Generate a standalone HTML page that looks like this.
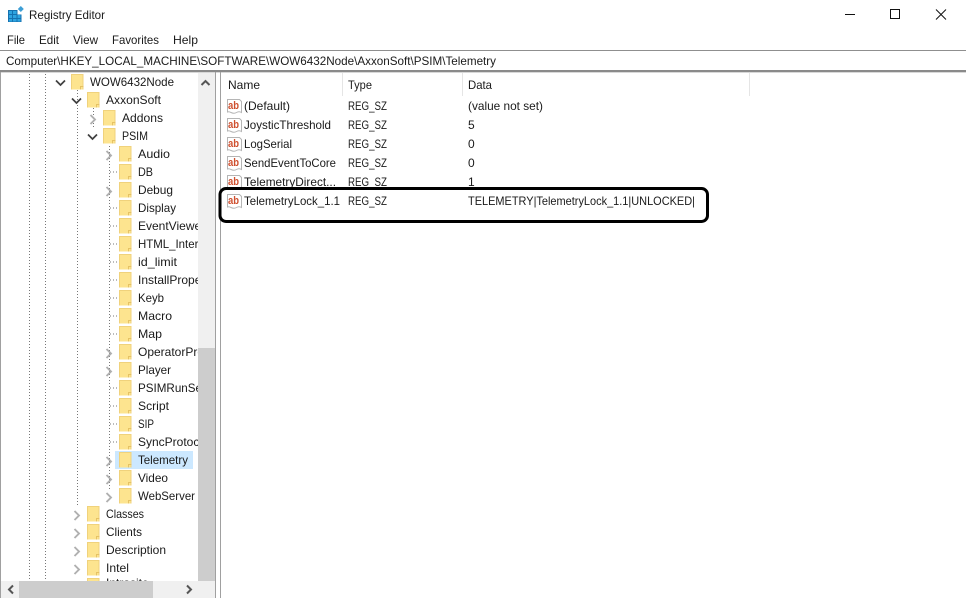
<!DOCTYPE html>
<html><head><meta charset="utf-8"><title>Registry Editor</title>
<style>
html,body{margin:0;padding:0;background:#fff;width:966px;height:598px;overflow:hidden}
svg{display:block}
text{font-family:"Liberation Sans",sans-serif;font-size:12px;fill:#1a1a1a}
.ab{font-size:11px;font-weight:bold;fill:#cf4f2e}
</style></head><body>
<svg width="966" height="598" viewBox="0 0 966 598" xmlns="http://www.w3.org/2000/svg">
<defs>
<g id="f"><rect x="0" y="0" width="12.500" height="15.500" fill="#fde48f"/><path d="M0.500 15.500V0.500H12V15.500" fill="none" stroke="#f0d27c"/><path d="M9.500 15.500V12.500H12.500" fill="none" stroke="#e6c264"/></g>
<path id="c" d="M-3 -4L1.500 0.500L-3 5" fill="none" stroke="#b0b0b0" stroke-width="1.900"/>
<path id="d" d="M-4.500 -2L0 2.500L4.500 -2" fill="none" stroke="#404040" stroke-width="1.700"/>
<g id="i"><path d="M1.500 1.500H13.500L15.500 3.500V14.500Q13 13 10.500 14.500T5 14.500T1.500 14.500Z" fill="#fff" stroke="#b5b5b5"/></g>
<clipPath id="tc"><rect x="1" y="73" width="197" height="508"/></clipPath>
<clipPath id="lc"><rect x="221" y="73" width="745" height="525"/></clipPath>
</defs>

<!-- title bar -->
<rect x="8" y="10" width="13.500" height="12" fill="#1572b0"/>
<rect x="17.500" y="10" width="4" height="4.500" fill="#fff"/>
<g fill="#2fa4e0"><rect x="9" y="11" width="3" height="3"/><rect x="13" y="11" width="3.500" height="3"/><rect x="9" y="15" width="3" height="3"/><rect x="13" y="15" width="3.500" height="3"/><rect x="17.500" y="15" width="3" height="3"/><rect x="9" y="19" width="3" height="2.500"/><rect x="13" y="19" width="3.500" height="2.500"/><rect x="17.500" y="19" width="3" height="2.500"/></g>
<path d="M20.800 6L23.800 9L20.800 12L17.800 9Z" fill="#3e9fd6"/>
<text x="29" y="19" textLength="76" lengthAdjust="spacingAndGlyphs">Registry Editor</text>
<rect x="845" y="14" width="10" height="1" fill="#111"/>
<rect x="890.500" y="9.500" width="9" height="9" fill="none" stroke="#111"/>
<path d="M936 9.500L946 19.500M946 9.500L936 19.500" stroke="#111" fill="none"/>

<!-- menu -->
<text x="7" y="44" textLength="18" lengthAdjust="spacingAndGlyphs">File</text>
<text x="39" y="44" textLength="20" lengthAdjust="spacingAndGlyphs">Edit</text>
<text x="73" y="44" textLength="25" lengthAdjust="spacingAndGlyphs">View</text>
<text x="112" y="44" textLength="47" lengthAdjust="spacingAndGlyphs">Favorites</text>
<text x="173" y="44" textLength="25" lengthAdjust="spacingAndGlyphs">Help</text>

<!-- address bar -->
<rect x="0" y="50" width="966" height="1" fill="#8f8f8f"/>
<text x="6" y="65" textLength="490" lengthAdjust="spacingAndGlyphs">Computer\HKEY_LOCAL_MACHINE\SOFTWARE\WOW6432Node\AxxonSoft\PSIM\Telemetry</text>
<rect x="0" y="70" width="966" height="2" fill="#8a8a8a"/>
<rect x="0" y="72" width="966" height="1" fill="#d8d8d8"/>

<!-- pane borders -->
<rect x="0" y="72" width="1" height="526" fill="#a0a0a0"/>
<rect x="215" y="72" width="1" height="526" fill="#a0a0a0"/>
<rect x="220" y="72" width="1" height="526" fill="#a0a0a0"/>

<!-- tree -->
<rect x="115" y="451" width="78" height="18" fill="#cce8ff"/>
<g stroke="#777" stroke-dasharray="1 2" fill="none">
<path d="M29.500 74V581M45.500 74V581M77.500 90V505M93.500 108V127M109.500 146V490"/>
<path d="M110 172H117M110 208H117M110 226H117M110 244H117M110 262H117M110 280H117M110 298H117M110 316H117M110 334H117M110 388H117M110 406H117M110 424H117M110 442H117"/>
</g>
<g clip-path="url(#tc)">
<use href="#d" x="60.500" y="82.500"/><use href="#d" x="76.500" y="100.500"/><use href="#c" x="93.500" y="119"/><use href="#d" x="92.500" y="136.500"/>
<use href="#c" x="109.500" y="155"/><use href="#c" x="109.500" y="191"/><use href="#c" x="109.500" y="353"/><use href="#c" x="109.500" y="371"/><use href="#c" x="109.500" y="461"/><use href="#c" x="109.500" y="479"/><use href="#c" x="109.500" y="497"/>
<use href="#c" x="77.500" y="515"/><use href="#c" x="77.500" y="533"/><use href="#c" x="77.500" y="551"/><use href="#c" x="77.500" y="569"/>

<use href="#f" x="71" y="74"/><text x="90" y="86" textLength="84" lengthAdjust="spacingAndGlyphs">WOW6432Node</text>
<use href="#f" x="87" y="92"/><text x="106" y="104" textLength="55" lengthAdjust="spacingAndGlyphs">AxxonSoft</text>
<use href="#f" x="103" y="110"/><text x="122" y="122" textLength="41" lengthAdjust="spacingAndGlyphs">Addons</text>
<use href="#f" x="103" y="128"/><text x="122" y="140" textLength="26" lengthAdjust="spacingAndGlyphs">PSIM</text>
<use href="#f" x="119" y="146"/><text x="138" y="158" textLength="32" lengthAdjust="spacingAndGlyphs">Audio</text>
<use href="#f" x="119" y="164"/><text x="138" y="176" textLength="15" lengthAdjust="spacingAndGlyphs">DB</text>
<use href="#f" x="119" y="182"/><text x="138" y="194" textLength="35" lengthAdjust="spacingAndGlyphs">Debug</text>
<use href="#f" x="119" y="200"/><text x="138" y="212" textLength="38" lengthAdjust="spacingAndGlyphs">Display</text>
<use href="#f" x="119" y="218"/><text x="138" y="230">EventViewer</text>
<use href="#f" x="119" y="236"/><text x="138" y="248" textLength="82" lengthAdjust="spacingAndGlyphs">HTML_Interface</text>
<use href="#f" x="119" y="254"/><text x="138" y="266" textLength="39" lengthAdjust="spacingAndGlyphs">id_limit</text>
<use href="#f" x="119" y="272"/><text x="138" y="284">InstallProperties</text>
<use href="#f" x="119" y="290"/><text x="138" y="302" textLength="26" lengthAdjust="spacingAndGlyphs">Keyb</text>
<use href="#f" x="119" y="308"/><text x="138" y="320" textLength="34" lengthAdjust="spacingAndGlyphs">Macro</text>
<use href="#f" x="119" y="326"/><text x="138" y="338" textLength="24" lengthAdjust="spacingAndGlyphs">Map</text>
<use href="#f" x="119" y="344"/><text x="138" y="356">OperatorProtocol</text>
<use href="#f" x="119" y="362"/><text x="138" y="374" textLength="33" lengthAdjust="spacingAndGlyphs">Player</text>
<use href="#f" x="119" y="380"/><text x="138" y="392" textLength="84" lengthAdjust="spacingAndGlyphs">PSIMRunServer</text>
<use href="#f" x="119" y="398"/><text x="138" y="410" textLength="31" lengthAdjust="spacingAndGlyphs">Script</text>
<use href="#f" x="119" y="416"/><text x="138" y="428" textLength="16" lengthAdjust="spacingAndGlyphs">SIP</text>
<use href="#f" x="119" y="434"/><text x="138" y="446">SyncProtocol</text>
<use href="#f" x="119" y="452"/><text x="138" y="464" textLength="50" lengthAdjust="spacingAndGlyphs">Telemetry</text>
<use href="#f" x="119" y="470"/><text x="138" y="482" textLength="30" lengthAdjust="spacingAndGlyphs">Video</text>
<use href="#f" x="119" y="488"/><text x="138" y="500" textLength="57" lengthAdjust="spacingAndGlyphs">WebServer</text>
<use href="#f" x="87" y="506"/><text x="106" y="518" textLength="38" lengthAdjust="spacingAndGlyphs">Classes</text>
<use href="#f" x="87" y="524"/><text x="106" y="536" textLength="36" lengthAdjust="spacingAndGlyphs">Clients</text>
<use href="#f" x="87" y="542"/><text x="106" y="554" textLength="60" lengthAdjust="spacingAndGlyphs">Description</text>
<use href="#f" x="87" y="560"/><text x="106" y="572" textLength="23" lengthAdjust="spacingAndGlyphs">Intel</text>
<use href="#f" x="87" y="578"/><text x="106" y="587">Intrasite</text>
</g>

<!-- vertical scrollbar -->
<rect x="198" y="73" width="17" height="508" fill="#f0f0f0"/>
<rect x="198" y="348" width="17" height="233" fill="#cdcdcd"/>
<path d="M201.500 85L205.500 81L209.500 85" fill="none" stroke="#555" stroke-width="2"/>
<!-- horizontal scrollbar -->
<rect x="1" y="581" width="214" height="17" fill="#f0f0f0"/>
<rect x="19" y="581" width="134" height="17" fill="#cdcdcd"/>
<path d="M13 585.500L9 589.500L13 593.500" fill="none" stroke="#555" stroke-width="2"/>
<path d="M187 585.500L191 589.500L187 593.500" fill="none" stroke="#555" stroke-width="2"/>

<!-- list header -->
<g clip-path="url(#lc)">
<text x="228" y="89" textLength="32" lengthAdjust="spacingAndGlyphs">Name</text>
<text x="348" y="89" textLength="24" lengthAdjust="spacingAndGlyphs">Type</text>
<text x="468" y="89" textLength="24" lengthAdjust="spacingAndGlyphs">Data</text>
<path d="M342.500 73V96M462.500 73V96M749.500 73V96" stroke="#e5e5e5"/>

<!-- list rows -->
<use href="#i" x="226" y="98"/><text class="ab" x="228" y="109" textLength="11" lengthAdjust="spacingAndGlyphs">ab</text>
<text x="244" y="110" textLength="46" lengthAdjust="spacingAndGlyphs">(Default)</text><text x="348" y="110" textLength="39" lengthAdjust="spacingAndGlyphs">REG_SZ</text><text x="468" y="110" textLength="75" lengthAdjust="spacingAndGlyphs">(value not set)</text>

<use href="#i" x="226" y="117"/><text class="ab" x="228" y="128" textLength="11" lengthAdjust="spacingAndGlyphs">ab</text>
<text x="244" y="129" textLength="87" lengthAdjust="spacingAndGlyphs">JoysticThreshold</text><text x="348" y="129" textLength="39" lengthAdjust="spacingAndGlyphs">REG_SZ</text><text x="468" y="129">5</text>

<use href="#i" x="226" y="136"/><text class="ab" x="228" y="147" textLength="11" lengthAdjust="spacingAndGlyphs">ab</text>
<text x="244" y="148" textLength="48" lengthAdjust="spacingAndGlyphs">LogSerial</text><text x="348" y="148" textLength="39" lengthAdjust="spacingAndGlyphs">REG_SZ</text><text x="468" y="148">0</text>

<use href="#i" x="226" y="155"/><text class="ab" x="228" y="166" textLength="11" lengthAdjust="spacingAndGlyphs">ab</text>
<text x="244" y="167" textLength="92" lengthAdjust="spacingAndGlyphs">SendEventToCore</text><text x="348" y="167" textLength="39" lengthAdjust="spacingAndGlyphs">REG_SZ</text><text x="468" y="167">0</text>

<use href="#i" x="226" y="174"/><text class="ab" x="228" y="185" textLength="11" lengthAdjust="spacingAndGlyphs">ab</text>
<text x="244" y="186" textLength="92" lengthAdjust="spacingAndGlyphs">TelemetryDirect...</text><text x="348" y="186" textLength="39" lengthAdjust="spacingAndGlyphs">REG_SZ</text><text x="468" y="186">1</text>
</g>

<!-- highlight box -->
<rect x="220" y="188.500" width="487.500" height="33" rx="6" ry="6" fill="#fff" stroke="#000" stroke-width="3"/>
<use href="#i" x="226" y="193"/><text class="ab" x="228" y="204" textLength="11" lengthAdjust="spacingAndGlyphs">ab</text>
<text x="244" y="205" textLength="96" lengthAdjust="spacingAndGlyphs">TelemetryLock_1.1</text><text x="348" y="205" textLength="39" lengthAdjust="spacingAndGlyphs">REG_SZ</text><text x="468" y="205" textLength="227" lengthAdjust="spacingAndGlyphs">TELEMETRY|TelemetryLock_1.1|UNLOCKED|</text>
</svg>
</body></html>
